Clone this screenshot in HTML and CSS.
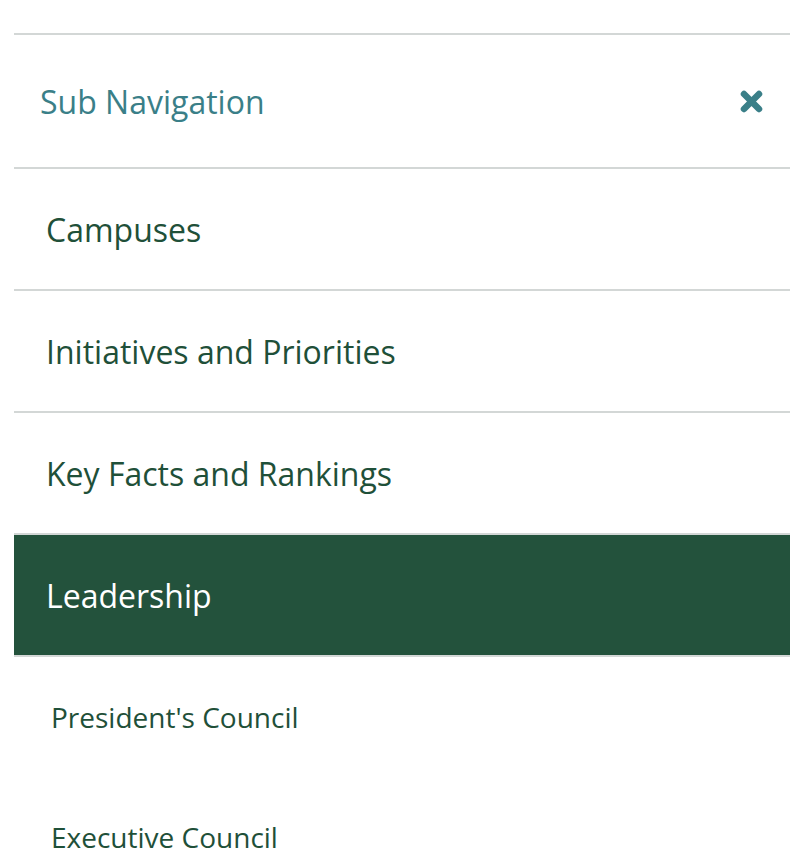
FILE: index.html
```html
<!DOCTYPE html>
<html lang="en">
<head>
    <meta charset="UTF-8">
    <meta name="viewport" content="width=device-width, initial-scale=1.0">
    <title>Sub Navigation</title>
    <link rel="stylesheet" href="styles.css">
</head>
<body>
    <nav class="subnav">
        <div class="subnav-header">
            <span class="subnav-title">Sub Navigation</span>
            <button class="subnav-close" aria-label="Close">
                <svg width="23" height="23" viewBox="0 0 23 23">
                    <path d="M4 4 L19 19 M19 4 L4 19" stroke="currentColor" stroke-width="6.5" stroke-linecap="round"/>
                </svg>
            </button>
        </div>
        <ul class="subnav-list">
            <li><a href="#">Campuses</a></li>
            <li><a href="#">Initiatives and Priorities</a></li>
            <li><a href="#">Key Facts and Rankings</a></li>
            <li class="active">
                <a href="#">Leadership</a>
                <ul class="subnav-children">
                    <li><a href="#">President's Council</a></li>
                    <li><a href="#">Executive Council</a></li>
                </ul>
            </li>
        </ul>
    </nav>
</body>
</html>
```

FILE: styles.css
```css
* {
    box-sizing: border-box;
    margin: 0;
    padding: 0;
}

body {
    background-color: #fff;
    font-family: 'Open Sans', sans-serif;
    overflow: hidden;
}

.subnav {
    margin: 33px 14px 0;
    border-top: 2px solid #d3d7d6;
}

.subnav-header {
    display: flex;
    align-items: center;
    justify-content: space-between;
    height: 132px;
    padding: 0 27px 0 26px;
}

.subnav-title {
    font-size: 32px;
    color: #3a7f88;
}

.subnav-close {
    display: flex;
    background: none;
    border: none;
    color: #3a7f88;
    cursor: pointer;
}

.subnav-list {
    list-style: none;
}

.subnav-list > li {
    border-top: 2px solid #d3d7d6;
}

.subnav-list > li > a {
    display: flex;
    align-items: center;
    height: 120px;
    padding-left: 32px;
    font-size: 32px;
    color: #1f5039;
    text-decoration: none;
}

.subnav-list > li.active > a {
    background-color: #23523c;
    color: #fff;
}

.subnav-children {
    list-style: none;
    border-top: 2px solid #d3d7d6;
}

.subnav-children a {
    display: flex;
    align-items: center;
    height: 120px;
    padding-left: 37px;
    font-size: 28px;
    color: #1f5039;
    text-decoration: none;
}
```
